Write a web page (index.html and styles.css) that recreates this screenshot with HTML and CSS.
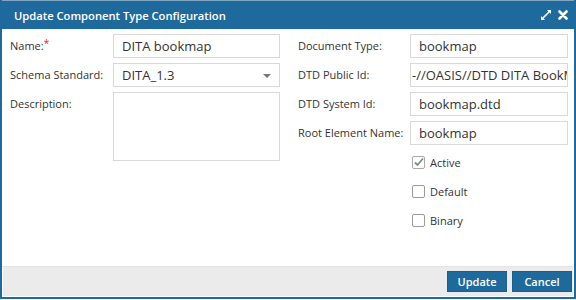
FILE: index.html
```html
<!DOCTYPE html>
<html>

<head>
    <title>Update Component Type Configuration</title>
    <link rel="stylesheet" href="styles.css">
</head>

<body>
    <div class="dialog">
        <div class="dialogHeader">
            <span class="dialogTitle">Update Component Type Configuration</span>
            <span class="headerIcons">
                <svg width="12" height="12" viewBox="0 0 12 12">
                    <path d="M7 1h4v4L9.6 3.6 3.6 9.6 5 11H1V7l1.4 1.4 6-6z" fill="#fff"/>
                </svg>
                <svg width="10" height="10" viewBox="0 0 10 10">
                    <path d="M1.5 1.5l7 7M8.5 1.5l-7 7" stroke="#fff" stroke-width="2.6" stroke-linecap="round"/>
                </svg>
            </span>
        </div>
        <div class="dialogBody">
            <div class="column leftColumn">
                <div class="formRow">
                    <label>Name:<span class="required">*</span></label>
                    <div class="textInput">DITA bookmap</div>
                </div>
                <div class="formRow">
                    <label>Schema Standard:</label>
                    <div class="textInput selectInput">DITA_1.3<span class="caret"></span></div>
                </div>
                <div class="formRow">
                    <label>Description:</label>
                    <div class="textArea"></div>
                </div>
            </div>
            <div class="column rightColumn">
                <div class="formRow">
                    <label>Document Type:</label>
                    <div class="textInput">bookmap</div>
                </div>
                <div class="formRow">
                    <label>DTD Public Id:</label>
                    <div class="textInput scrolledInput">-//OASIS//DTD DITA BookMap//EN</div>
                </div>
                <div class="formRow">
                    <label>DTD System Id:</label>
                    <div class="textInput">bookmap.dtd</div>
                </div>
                <div class="formRow">
                    <label>Root Element Name:</label>
                    <div class="textInput">bookmap</div>
                </div>
                <div class="formRow">
                    <span></span>
                    <div class="checkRow"><span class="checkBox checked">
                        <svg width="11" height="11" viewBox="0 0 11 11"><path d="M2 5.5l2.5 2.5L10 1.5" fill="none" stroke="#888" stroke-width="1.8"/></svg>
                    </span>Active</div>
                </div>
                <div class="formRow">
                    <span></span>
                    <div class="checkRow"><span class="checkBox"></span>Default</div>
                </div>
                <div class="formRow">
                    <span></span>
                    <div class="checkRow"><span class="checkBox"></span>Binary</div>
                </div>
            </div>
        </div>
        <div class="dialogFooter">
            <button class="dialogButton">Update</button>
            <button class="dialogButton">Cancel</button>
        </div>
    </div>
</body>

</html>
```

FILE: styles.css
```css
body {
    margin: 0;
    font-family: 'Open Sans', sans-serif;
    font-size: 11px;
    color: #333;
    background-color: #fff;
}

.dialog {
    width: 576px;
    height: 299px;
    box-sizing: border-box;
    background-color: #1f6a9c;
    padding: 0 2px 2px 2px;
    display: flex;
    flex-direction: column;
}

.dialogHeader {
    height: 29px;
    display: flex;
    align-items: center;
    justify-content: space-between;
    padding: 0 6px 0 12px;
    color: #fff;
    border-top: 1px solid #7fa6c2;
    box-sizing: border-box;
}

.dialogTitle {
    font-weight: 600;
    font-size: 11.2px;
}

.headerIcons {
    display: flex;
    align-items: center;
    gap: 6px;
}

.dialogBody {
    flex: 1;
    display: flex;
    gap: 18px;
    background-color: #fff;
    border: 1px solid #fff;
    border-bottom: none;
    padding: 4px 5px 0 7px;
}

.column {
    width: 270px;
}

.rightColumn {
    width: 270px;
}

.formRow {
    display: grid;
    grid-template-columns: 103px 1fr;
    align-items: start;
    margin-bottom: 5px;
}

.rightColumn .formRow {
    grid-template-columns: 112px 1fr;
}

.formRow label {
    line-height: 24px;
    white-space: nowrap;
}

.required {
    color: #e02020;
    vertical-align: top;
    font-size: 10px;
    line-height: 18px;
}

.textInput {
    height: 24px;
    box-sizing: border-box;
    border: 1px solid #d9d9d9;
    padding: 0 8px;
    font-size: 13px;
    line-height: 22px;
    white-space: nowrap;
    overflow: hidden;
    position: relative;
}

.scrolledInput {
    padding-left: 1px;
    padding-right: 0;
}

.selectInput {
    padding-right: 20px;
}

.caret {
    position: absolute;
    right: 8px;
    top: 10px;
    border-left: 4px solid transparent;
    border-right: 4px solid transparent;
    border-top: 4px solid #777;
}

.textArea {
    height: 69px;
    box-sizing: border-box;
    border: 1px solid #d9d9d9;
}

.checkRow {
    display: flex;
    align-items: center;
    height: 24px;
    padding-left: 2px;
}

.checkBox {
    width: 13px;
    height: 13px;
    box-sizing: border-box;
    border: 1px solid #999;
    border-radius: 2px;
    margin-right: 5px;
    display: flex;
    align-items: center;
    justify-content: center;
}

.checkBox.checked {
    border-color: #aaa;
}

.dialogFooter {
    height: 29px;
    display: flex;
    align-items: center;
    justify-content: flex-end;
    gap: 5px;
    padding: 0 1px 0 0;
    background-color: #ebebeb;
    border: 1px solid #fff;
    border-top: 1px solid #e4e4e4;
}

.dialogButton {
    height: 21px;
    width: 60px;
    border: 1px solid #1a5e8c;
    background-color: #1f6a9c;
    color: #fff;
    font-family: 'Open Sans', sans-serif;
    font-size: 11px;
    font-weight: 600;
    padding: 0;
    cursor: pointer;
}
```
